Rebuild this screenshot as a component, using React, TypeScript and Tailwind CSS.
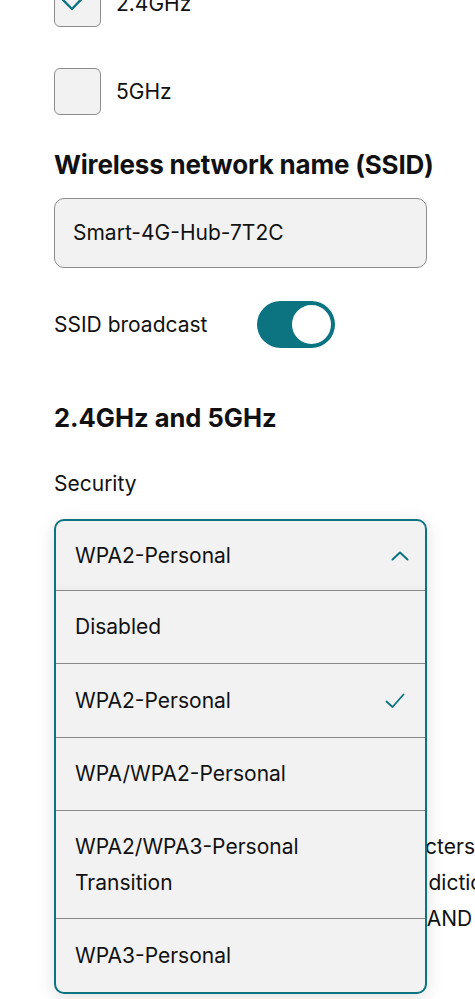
import { useState } from 'react';

const TEAL = '#0b7480';

const options = [
  { label: 'Disabled', h: 'h-[73px]' },
  { label: 'WPA2-Personal', h: 'h-[74px]' },
  { label: 'WPA/WPA2-Personal', h: 'h-[73px]' },
  { label: 'WPA2/WPA3-Personal Transition', h: 'h-[108px] leading-9' },
  { label: 'WPA3-Personal', h: 'h-[74px]' },
];

function Checkbox({ checked, label }: { checked: boolean; label: string }) {
  return (
    <div className="flex items-center gap-[15px]">
      <div className="relative w-[47px] h-[47px] rounded-[6px] border border-[#8c8c8c] bg-[#f2f2f2] shrink-0">
        {checked && (
          <svg className="absolute left-[6px] top-[4px]" width="34" height="30" viewBox="0 0 34 30" fill="none">
            <path d="M2 15 L11 24 L31 3" stroke={TEAL} strokeWidth="2.4" strokeLinecap="round" strokeLinejoin="round" />
          </svg>
        )}
      </div>
      <span className="text-[21px] leading-7 text-[#111]">{label}</span>
    </div>
  );
}

export default function App() {
  const [selected] = useState('WPA2-Personal');

  return (
    <div className="w-[475px] h-[999px] overflow-hidden bg-white text-[#111]" style={{ fontFamily: 'Inter, "Noto Sans", sans-serif' }}>
      <div className="px-[54px] -mt-5 flex flex-col">
        <Checkbox checked label="2.4GHz" />
        <div className="mt-[41px]">
          <Checkbox checked={false} label="5GHz" />
        </div>

        <h2 className="mt-[34px] text-[26px] leading-8 font-bold whitespace-nowrap tracking-[-0.2px]">Wireless network name (SSID)</h2>

        <div className="mt-[17px] w-[373px] h-[70px] rounded-[10px] border border-[#8c8c8c] bg-[#f2f2f2] flex items-center pl-[18px] text-[21px]">
          Smart-4G-Hub-7T2C
        </div>

        <div className="mt-[33px] flex items-center">
          <span className="text-[21px] leading-7 w-[203px]">SSID broadcast</span>
          <div className="w-[78px] h-[47px] rounded-full flex items-center justify-end pr-[2px]" style={{ backgroundColor: TEAL }}>
            <div className="w-[43px] h-[43px] rounded-full bg-white border-2" style={{ borderColor: TEAL }} />
          </div>
        </div>

        <h2 className="mt-[54px] text-[25.5px] leading-8 font-bold">2.4GHz and 5GHz</h2>

        <div className="mt-[36px] text-[21px] leading-7">Security</div>

        <div className="relative mt-[21px]">
          {/* content behind the open list */}
          <div className="pt-[310px] text-[21px] leading-9 whitespace-nowrap">
            <div className="flex justify-end w-[421px]">Passwords must be 8 to 63 characters</div>
            <div className="flex justify-end w-[540px]">long and not use common dictionary words</div>
            <div className="flex justify-end w-[518px]">with letters AND a number</div>
          </div>

          <div
            className="absolute left-0 top-0 w-[373px] rounded-[10px] border-2 bg-[#f2f2f2] overflow-hidden shadow-[0_4px_18px_rgba(0,0,0,0.12)]"
            style={{ borderColor: TEAL }}
          >
            <div className="h-[69px] flex items-center justify-between pl-[19px] pr-[16px] text-[21px] shadow-[inset_0_-8px_10px_-8px_rgba(0,0,0,0.06)]">
              <span>{selected}</span>
              <svg width="18" height="10" viewBox="0 0 18 10" fill="none">
                <path d="M1.5 8.5 L9 1.5 L16.5 8.5" stroke={TEAL} strokeWidth="2" strokeLinecap="round" strokeLinejoin="round" />
              </svg>
            </div>
            {options.map((opt) => {
              const twoLine = opt.label.includes('Transition');
              return (
                <div
                  key={opt.label}
                  className={`border-t border-[#8a8a8a] flex items-center justify-between pl-[19px] pr-[20px] text-[21px] ${opt.h}`}
                >
                  <span className={twoLine ? 'w-[270px]' : ''}>{opt.label}</span>
                  {opt.label === selected && (
                    <svg width="20" height="16" viewBox="0 0 20 16" fill="none">
                      <path d="M1.5 8.5 L7.5 14 L18.5 1.5" stroke={TEAL} strokeWidth="1.8" strokeLinecap="round" strokeLinejoin="round" />
                    </svg>
                  )}
                </div>
              );
            })}
          </div>
        </div>
      </div>
    </div>
  );
}
